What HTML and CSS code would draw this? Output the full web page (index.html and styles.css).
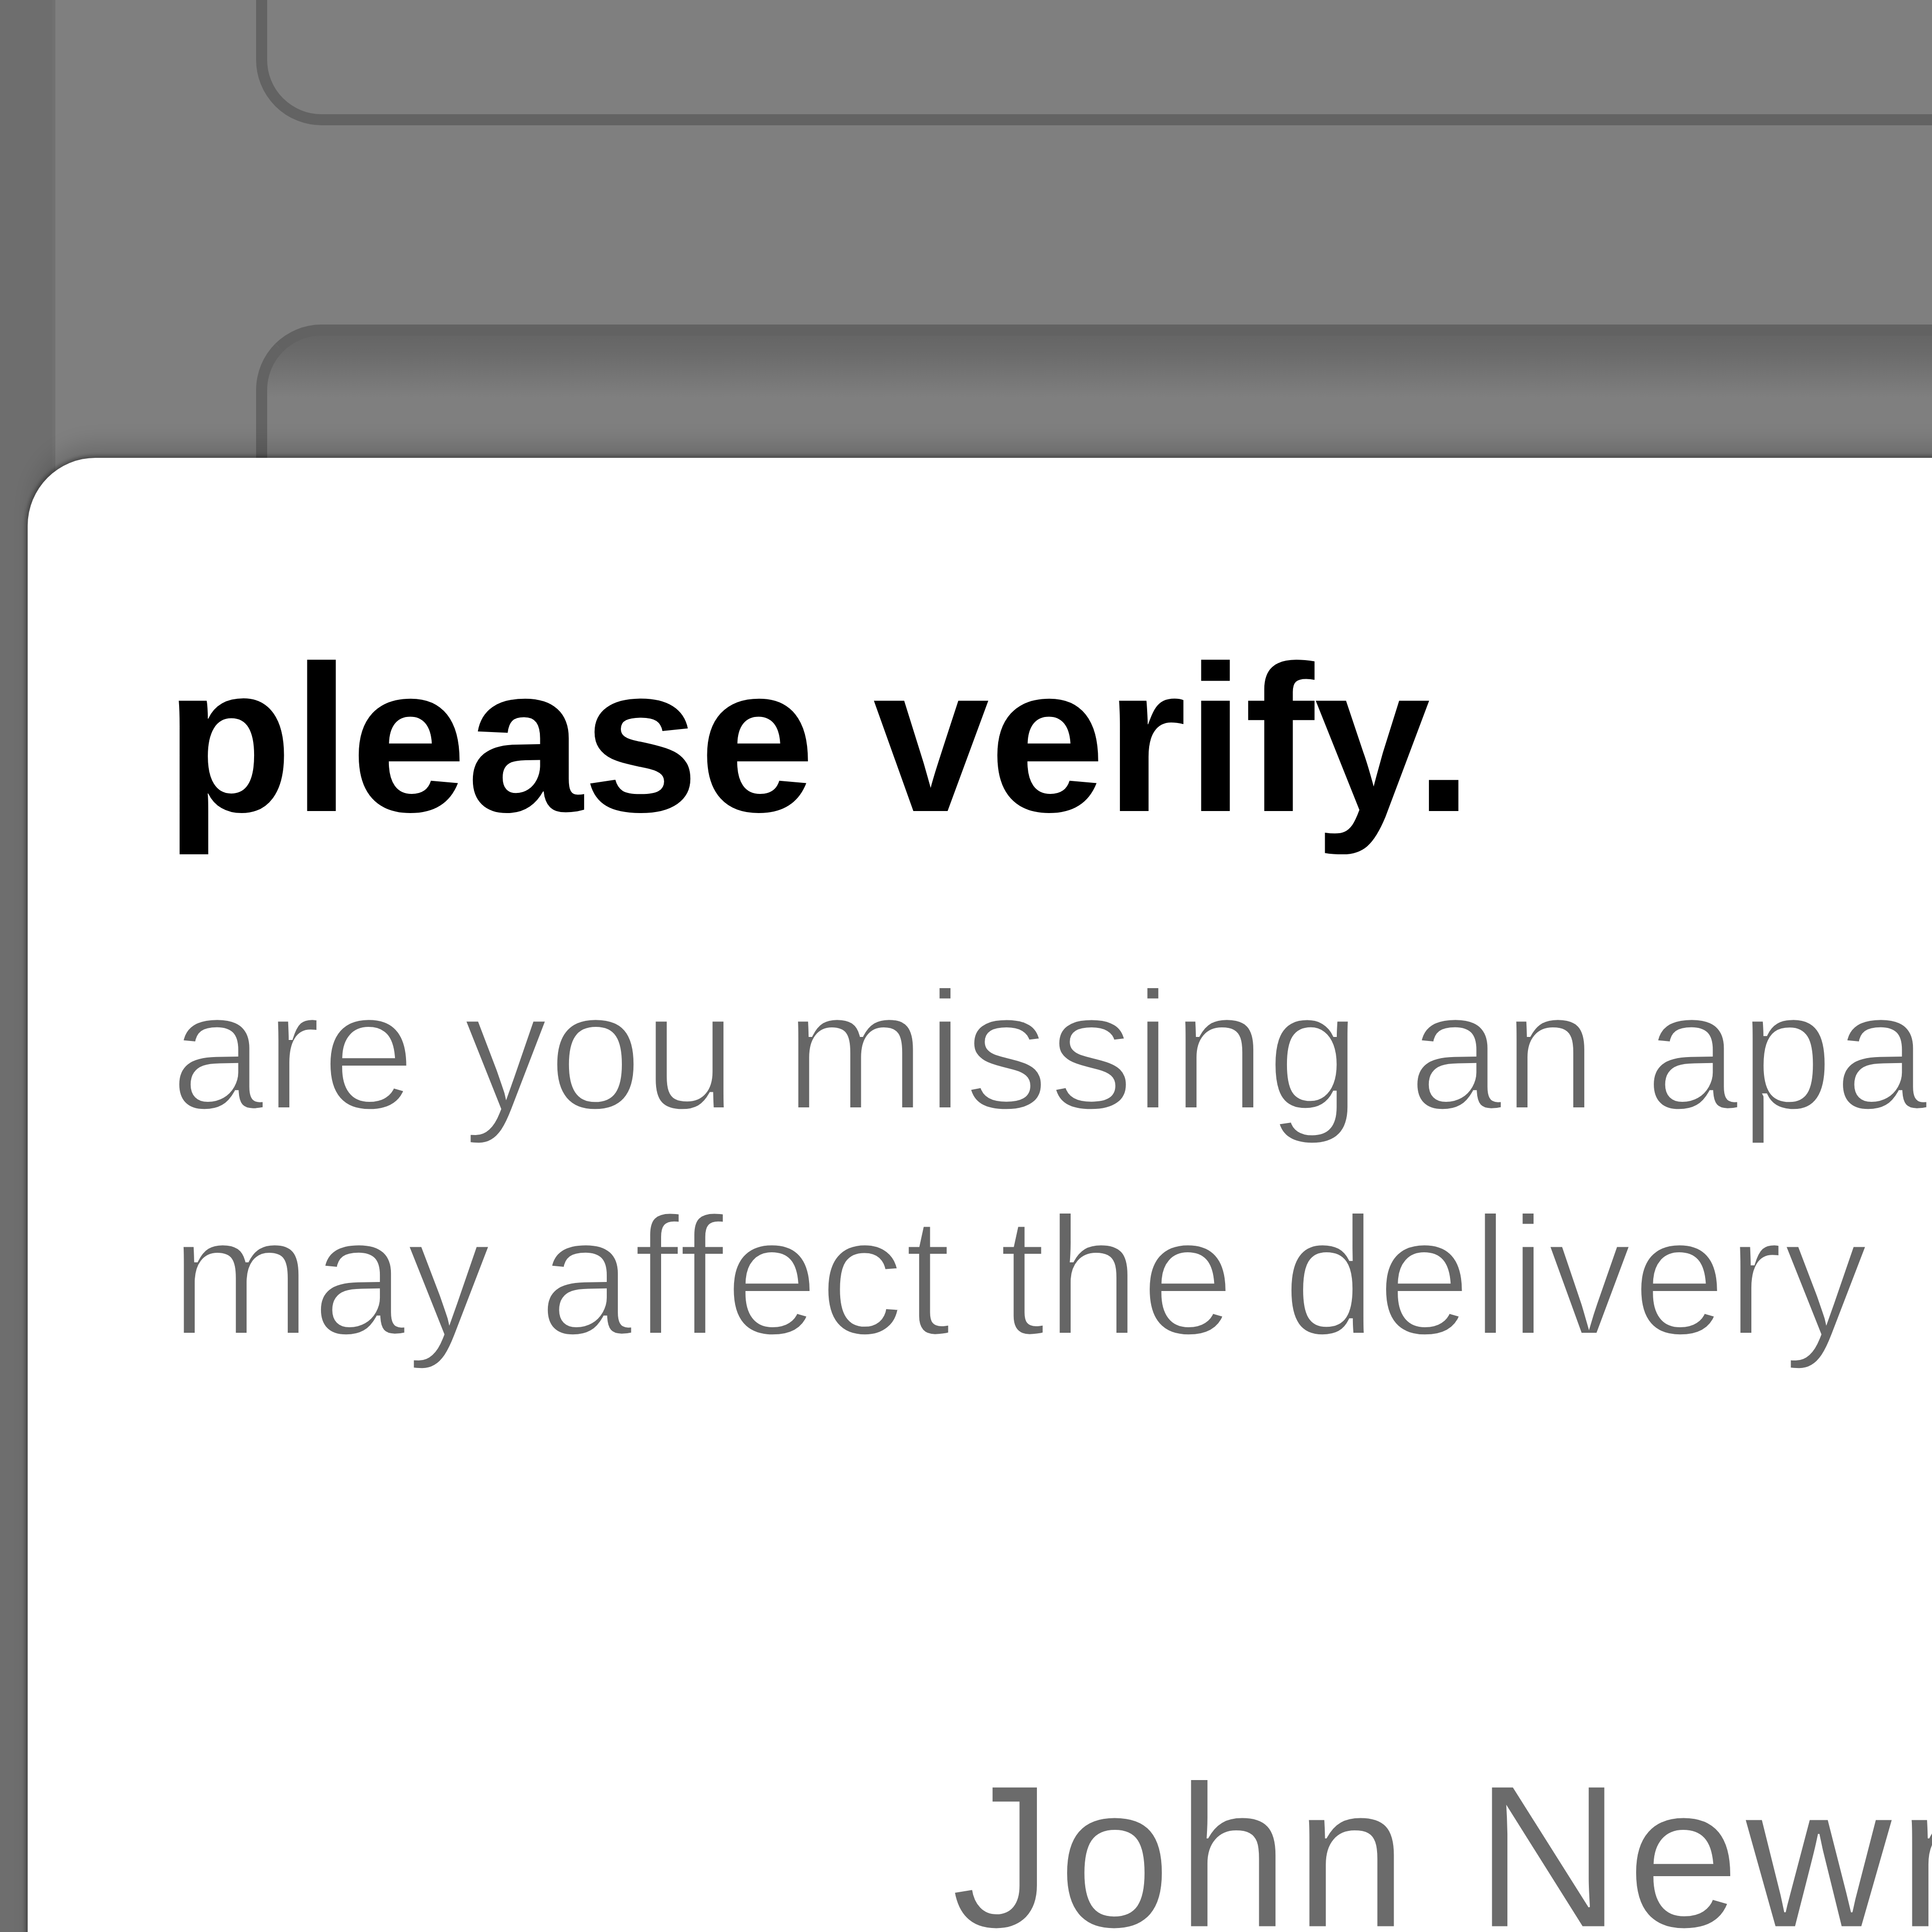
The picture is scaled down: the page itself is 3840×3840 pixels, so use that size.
FILE: index.html
```html
<!DOCTYPE html>
<html lang="en">
<head>
<meta charset="utf-8">
<title>please verify.</title>
<link rel="stylesheet" href="styles.css">
</head>
<body>
  <div class="app">
    <aside class="rail"></aside>
    <main class="feed">
      <div class="card card-prev"></div>
      <div class="card card-next"></div>
    </main>
  </div>
  <div class="scrim"></div>
  <section class="sheet">
    <h1 class="sheet-title">please verify.</h1>
    <p class="sheet-text">are you missing an apartment or suite number? this<br>may affect the delivery</p>
    <div class="recipient">John Newman</div>
  </section>
</body>
</html>
```

FILE: styles.css
```css
html, body {
  margin: 0;
  width: 3840px;
  height: 3840px;
  overflow: hidden;
}

body {
  position: relative;
  background: #ffffff;
  font-family: "Liberation Sans", Arial, Helvetica, sans-serif;
}

.app {
  display: flex;
  height: 100%;
}

.rail {
  flex: none;
  width: 104px;
  background: #dcdcdc;
  border-right: 6px solid #e2e2e2;
}

.feed {
  flex: 1;
  padding-left: 399px;
  margin-right: -800px;
}

.card {
  box-sizing: border-box;
  border: 22px solid #c6c6c6;
  border-radius: 130px;
  background: #ffffff;
}

.card-prev {
  margin-top: -600px;
  height: 849px;
}

.card-next {
  margin-top: 396px;
  height: 3200px;
  border-top-color: #c4c4c4;
  background: linear-gradient(#cbcbcb 0, #d6d6d6 35px, #ffffff 125px);
}

.scrim {
  position: absolute;
  inset: 0;
  background: rgba(0, 0, 0, 0.5);
}

.sheet {
  position: absolute;
  left: 55px;
  top: 910px;
  width: 6000px;
  height: 4000px;
  box-sizing: border-box;
  padding: 309px 0 0 283px;
  background: #ffffff;
  border-radius: 135px 135px 0 0;
  box-shadow: 0 0 6px 5px rgba(0, 0, 0, 0.3), 0 -40px 40px -10px rgba(0, 0, 0, 0.14);
}

.sheet-title {
  margin: 0 0 0 -10px;
  font-size: 415px;
  line-height: 498px;
  font-weight: 700;
  color: #000000;
}

.sheet-text {
  margin: 147px 0 0;
  font-size: 338px;
  line-height: 448px;
  color: #666666;
  white-space: nowrap;
  -webkit-text-stroke: 8px #ffffff;
}

.recipient {
  margin-top: 687px;
  padding-left: 1552px;
  font-size: 405px;
  line-height: 486px;
  letter-spacing: 10px;
  color: #6b6b6b;
  white-space: nowrap;
  -webkit-text-stroke: 3px #ffffff;
}
```
